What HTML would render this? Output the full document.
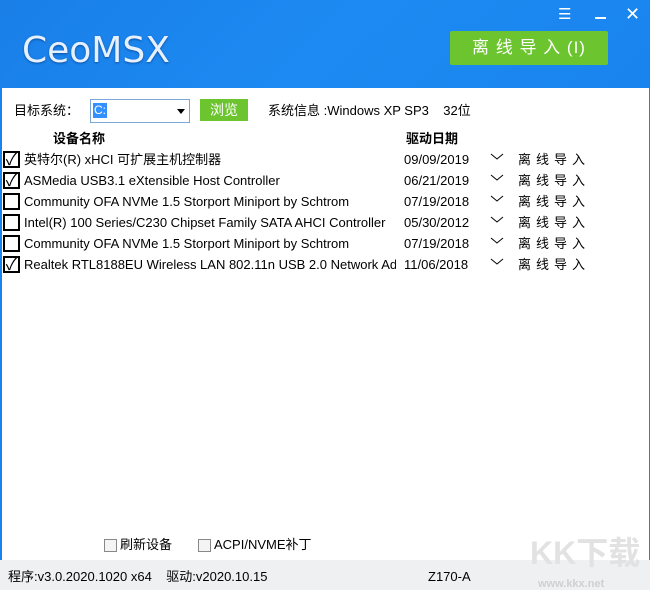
<!DOCTYPE html>
<html><head><meta charset="utf-8"><style>
*{margin:0;padding:0;box-sizing:border-box}
body{width:650px;height:590px;position:relative;overflow:hidden;background:#fff;font-family:"Liberation Sans","Noto Sans CJK SC",sans-serif;font-size:13px;color:#000}
.hdr{position:absolute;left:0;top:0;width:650px;height:88px;background:linear-gradient(135deg,#1a7fe8 0%,#1c8af2 50%,#1a84ee 100%)}
.logo{position:absolute;left:22px;top:30px;font-size:36px;color:#e6f0ff;font-family:"DejaVu Sans","Liberation Sans",sans-serif;text-shadow:0 1px 2px #0a50a0}
.btn{position:absolute;left:450px;top:31px;width:158px;height:34px;background:#6cc42f;color:#fff;font-size:17px;text-align:center;line-height:34px;letter-spacing:1px;border-radius:2px;white-space:nowrap}
.ic{position:absolute;color:#fff;font-size:16px}
.bord{position:absolute;left:0;top:88px;width:2px;height:472px;background:#1a84ee}
.bordr{position:absolute;right:0;top:88px;width:1px;height:472px;background:#1a84ee}
.t{position:absolute;white-space:nowrap;line-height:16px}
.sel{position:absolute;left:90px;top:99px;width:100px;height:24px;border:1px solid #7aa7d8;background:#fff}
.sel .c{position:absolute;left:2px;top:3px;background:#3390ff;color:#fff;font-size:12px;padding:0 1px;line-height:15px}
.sel .a{position:absolute;right:4px;top:9px;border-left:4px solid transparent;border-right:4px solid transparent;border-top:5px solid #000}
.br{position:absolute;left:200px;top:99px;width:48px;height:22px;background:#6cc42f;color:#fff;text-align:center;line-height:22px;font-size:14px}
.cb{position:absolute;left:3px;width:17px;height:17px;border:2px solid #000;background:#fff;font-size:17px;line-height:13px;text-align:center}
.chev{position:absolute;left:490px;width:14px;height:8px}
.foot{position:absolute;left:0;top:560px;width:650px;height:30px;background:#eef0f2}
.sc{position:absolute;width:13px;height:13px;border:1px solid #888;background:#f4f4f4}
.lx{letter-spacing:5px;left:518px}
</style></head><body>
<div class="hdr"></div>
<div class="logo">CeoMSX</div>
<div class="ic" style="left:558px;top:5px;font-size:15px">☰</div>
<div style="position:absolute;left:595px;top:17px;width:11px;height:2px;background:#fff"></div>
<div class="ic" style="left:625px;top:4px;font-size:18px">✕</div>
<div class="btn">离 线 导 入 (I)</div>
<div class="bord"></div><div class="bordr"></div>
<div class="t" style="left:14px;top:103px;font-size:13px">目标系统：</div>
<div class="sel"><span class="c">C:</span><span class="a"></span></div>
<div class="br">浏览</div>
<div class="t" style="left:268px;top:103px">系统信息 :Windows XP SP3&nbsp;&nbsp;&nbsp;&nbsp;32位</div>
<div class="t" style="left:53px;top:131px;font-weight:bold">设备名称</div>
<div class="t" style="left:406px;top:131px;font-weight:bold">驱动日期</div>

<div class="cb" style="top:151px">✓</div><div class="t" style="left:24px;top:152px">英特尔(R) xHCI 可扩展主机控制器</div><div class="t" style="left:404px;top:152px">09/09/2019</div>
<div class="cb" style="top:172px">✓</div><div class="t" style="left:24px;top:173px">ASMedia USB3.1 eXtensible Host Controller</div><div class="t" style="left:404px;top:173px">06/21/2019</div>
<div class="cb" style="top:193px"></div><div class="t" style="left:24px;top:194px">Community OFA NVMe 1.5 Storport Miniport by Schtrom</div><div class="t" style="left:404px;top:194px">07/19/2018</div>
<div class="cb" style="top:214px"></div><div class="t" style="left:24px;top:215px">Intel(R) 100 Series/C230 Chipset Family SATA AHCI Controller</div><div class="t" style="left:404px;top:215px">05/30/2012</div>
<div class="cb" style="top:235px"></div><div class="t" style="left:24px;top:236px">Community OFA NVMe 1.5 Storport Miniport by Schtrom</div><div class="t" style="left:404px;top:236px">07/19/2018</div>
<div class="cb" style="top:256px">✓</div><div class="t" style="left:24px;top:257px;width:372px;overflow:hidden">Realtek RTL8188EU Wireless LAN 802.11n USB 2.0 Network Adapter</div><div class="t" style="left:404px;top:257px">11/06/2018</div>

<svg class="chev" style="top:153px" viewBox="0 0 14 8"><path d="M1 1 L7 6 L13 1" fill="none" stroke="#000"/></svg>
<svg class="chev" style="top:174px" viewBox="0 0 14 8"><path d="M1 1 L7 6 L13 1" fill="none" stroke="#000"/></svg>
<svg class="chev" style="top:195px" viewBox="0 0 14 8"><path d="M1 1 L7 6 L13 1" fill="none" stroke="#000"/></svg>
<svg class="chev" style="top:216px" viewBox="0 0 14 8"><path d="M1 1 L7 6 L13 1" fill="none" stroke="#000"/></svg>
<svg class="chev" style="top:237px" viewBox="0 0 14 8"><path d="M1 1 L7 6 L13 1" fill="none" stroke="#000"/></svg>
<svg class="chev" style="top:258px" viewBox="0 0 14 8"><path d="M1 1 L7 6 L13 1" fill="none" stroke="#000"/></svg>
<div class="t lx" style="top:152px">离线导入</div>
<div class="t lx" style="top:173px">离线导入</div>
<div class="t lx" style="top:194px">离线导入</div>
<div class="t lx" style="top:215px">离线导入</div>
<div class="t lx" style="top:236px">离线导入</div>
<div class="t lx" style="top:257px">离线导入</div>

<div class="sc" style="left:104px;top:539px"></div><div class="t" style="left:120px;top:537px">刷新设备</div>
<div class="sc" style="left:198px;top:539px"></div><div class="t" style="left:214px;top:537px">ACPI/NVME补丁</div>
<div class="foot"></div>
<div class="t" style="left:8px;top:569px">程序:v3.0.2020.1020 x64&nbsp;&nbsp;&nbsp;&nbsp;驱动:v2020.10.15</div>
<div class="t" style="left:428px;top:569px">Z170-A</div>
<div class="t" style="left:530px;top:536px;font-size:32px;line-height:34px;color:#e2e2e2;font-weight:bold">KK下载</div>
<div class="t" style="left:538px;top:576px;font-size:11px;color:#d0d0d0;font-weight:bold">www.kkx.net</div>
</body></html>
